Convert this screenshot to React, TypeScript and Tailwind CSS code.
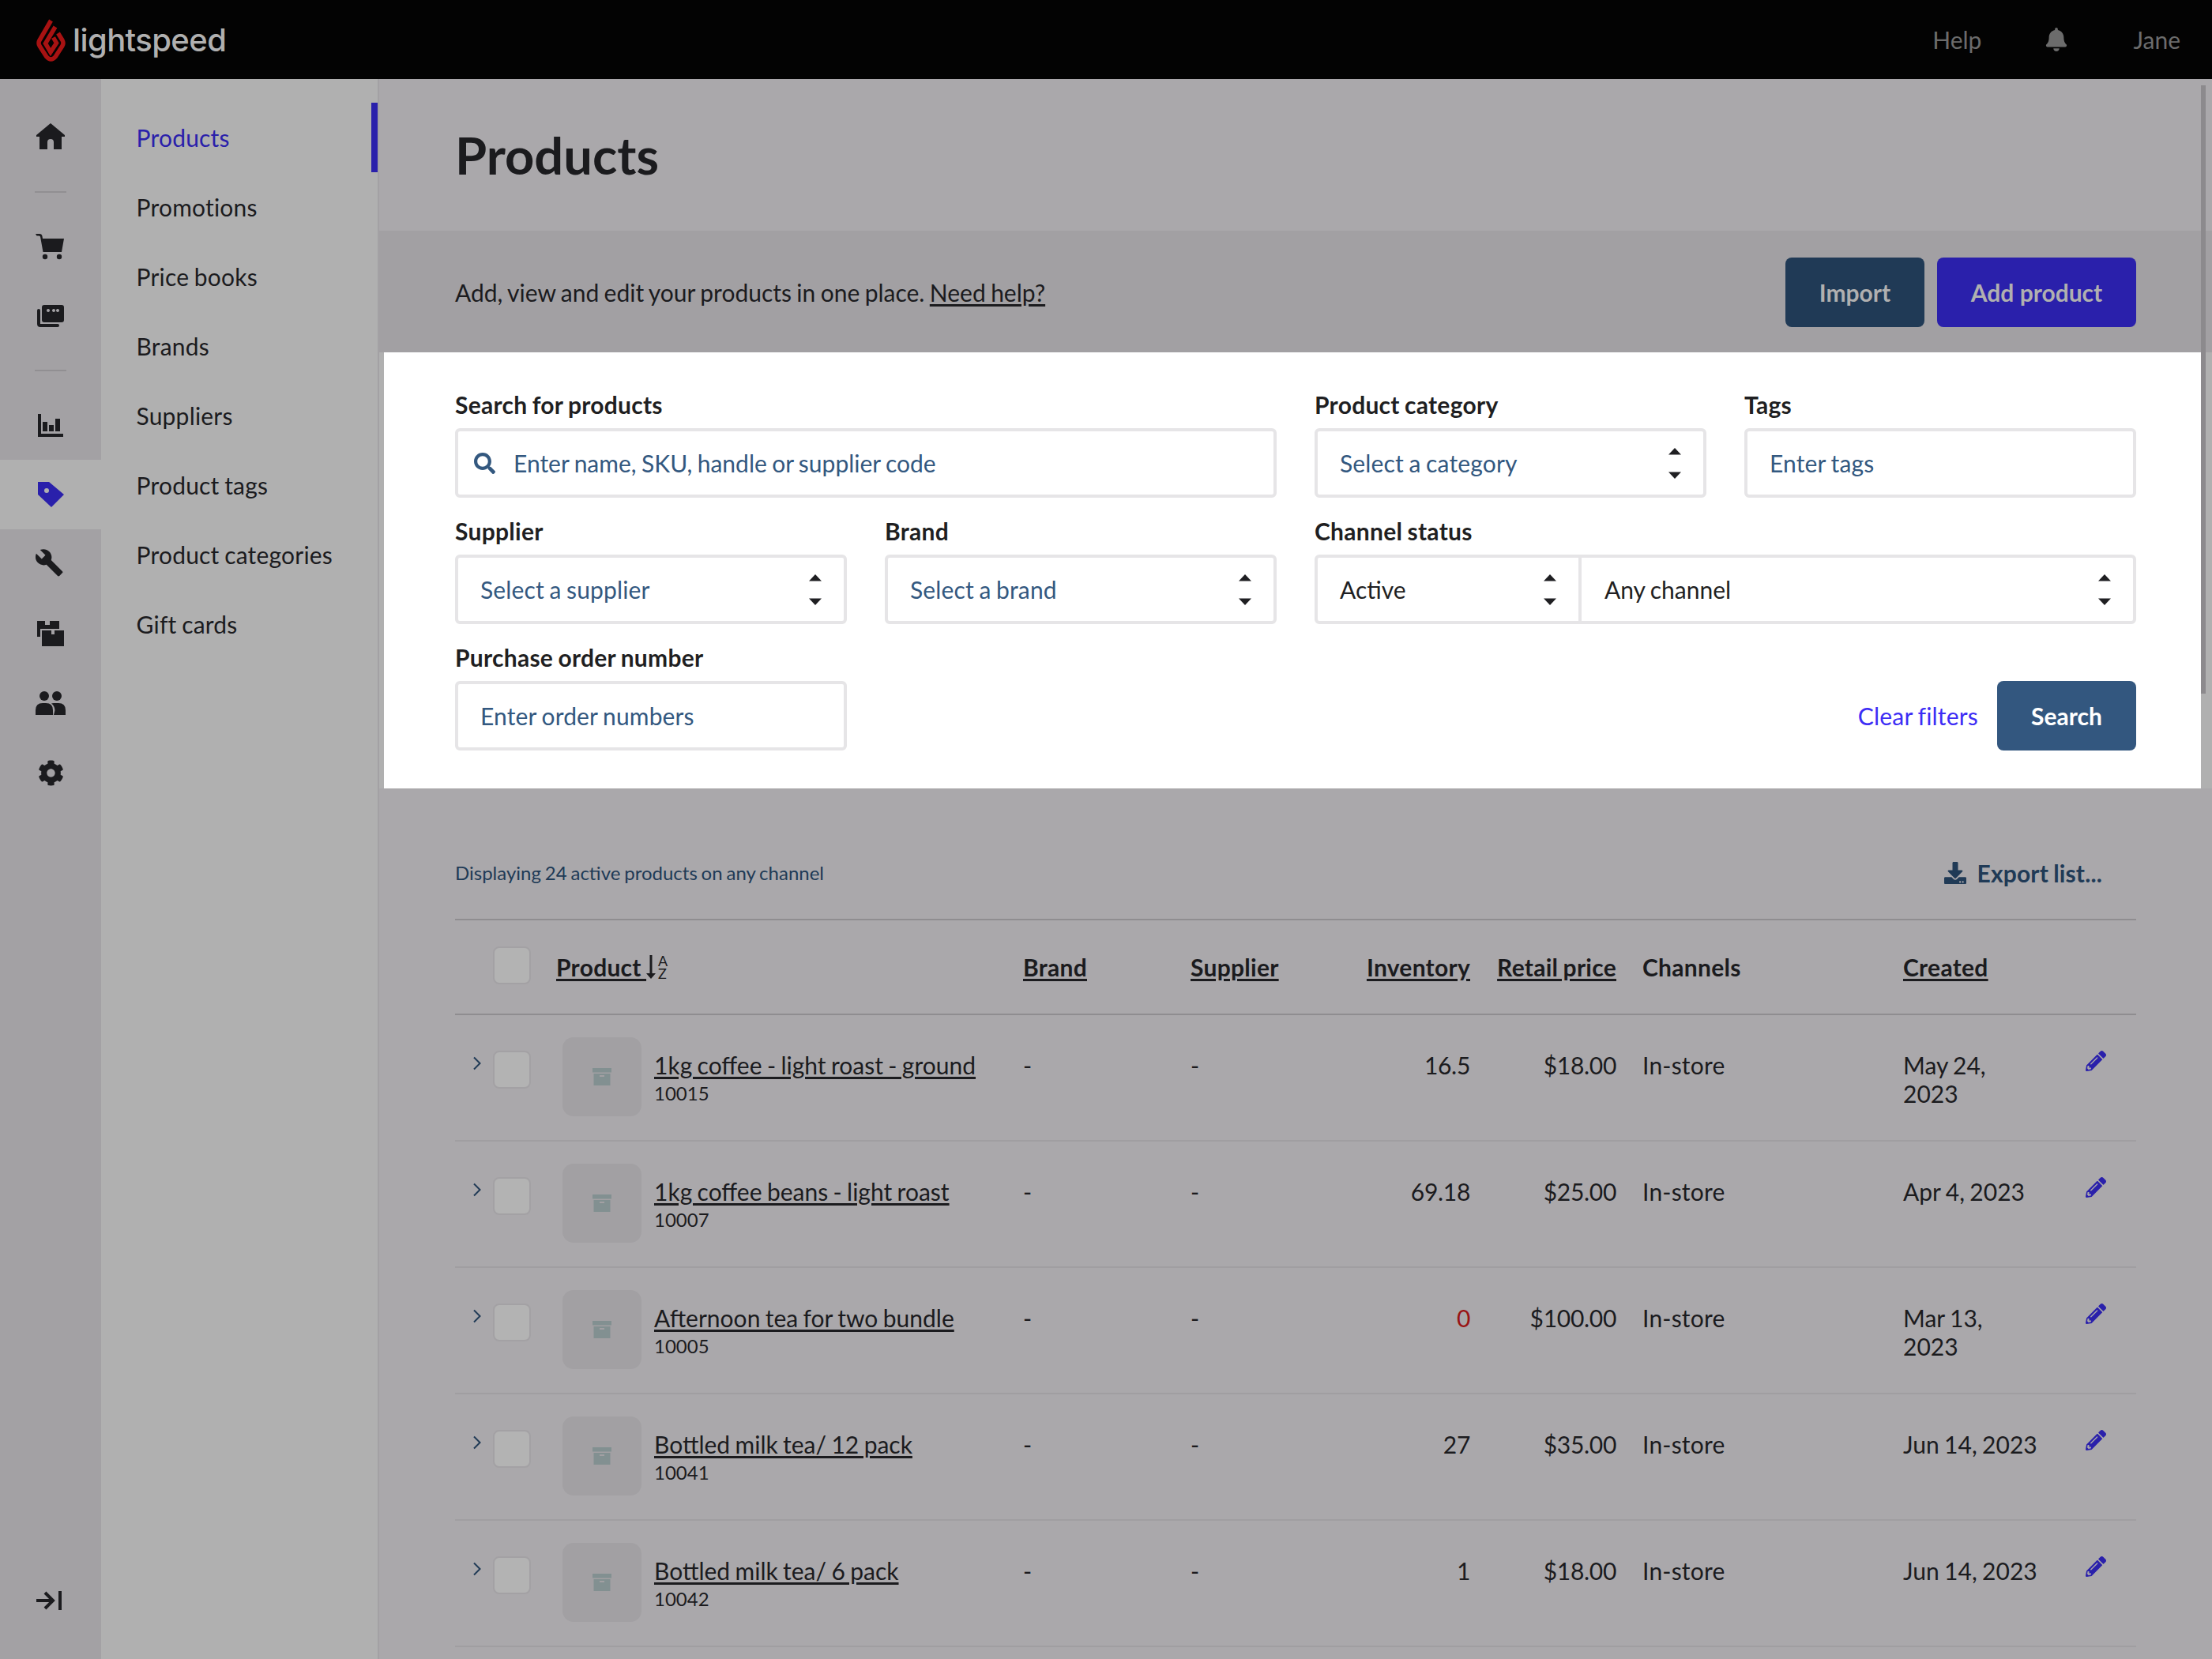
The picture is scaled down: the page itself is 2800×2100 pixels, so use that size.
import React from "react";
import { FaBell, FaCog, FaDownload, FaPencilAlt, FaSearch } from "react-icons/fa";

function Updown({ className = "" }: { className?: string }) {
  return (
    <svg width="16" height="39" viewBox="0 0 16 39" className={className}>
      <polygon points="8,0 16,8.5 0,8.5" fill="#1f1f22" />
      <polygon points="8,39 16,30.5 0,30.5" fill="#1f1f22" />
    </svg>
  );
}

function Label({ children }: { children: React.ReactNode }) {
  return <div className="h-[50px] text-[30px] leading-[40px] font-bold text-[#1f1f22] tracking-[0.27px]">{children}</div>;
}

function Field({ label, placeholder, select, className = "" }: { label: string; placeholder: string; select?: boolean; className?: string }) {
  return (
    <div className={className}>
      <Label>{label}</Label>
      <div className="h-[88px] rounded-[6px] border-[4px] border-[#e6e5e7] bg-white flex items-center justify-between pl-[28px] pr-[28px]">
        <span className="text-[30px] tracking-[0.15px] text-[#33587f]">{placeholder}</span>
        {select && <Updown />}
      </div>
    </div>
  );
}

function Box() {
  return (
    <svg width="24" height="22" viewBox="0 0 24 22">
      <rect x="0" y="0" width="24" height="5.5" fill="#829091" />
      <path fillRule="evenodd" d="M1.5 7H22.5V22H1.5ZM9 9V11H15V9Z" fill="#829091" />
    </svg>
  );
}

const COLS = "grid grid-cols-[128px_591px_212px_193px_161px_185px_33px_330px_174px_1fr]";

function Row({ name, sku, inv, price, date, red }: { name: string; sku: string; inv: string; price: string; date: string; red?: boolean }) {
  return (
    <div className={`${COLS} h-[160px] border-b-[2px] border-[#a09ea1] text-[30px] leading-[36px]`}>
      <div className="flex items-start">
        <svg width="10" height="18" viewBox="0 0 10 18" className="ml-[23px] mt-[52px]">
          <path d="M1 1.5 L8.5 9 L1 16.5" fill="none" stroke="#203a56" strokeWidth="2" />
        </svg>
        <div className="ml-[15px] mt-[45px] w-[48px] h-[48px] rounded-[8px] border-[2px] border-[#a3a1a4] bg-[#b3b3b3]" />
      </div>
      <div className="flex items-start pl-[8px]">
        <div className="mt-[28px] w-[100px] h-[100px] rounded-[14px] bg-[#a2a0a3] flex items-center justify-center">
          <Box />
        </div>
        <div className="ml-[16px] mt-[45px]">
          <div className="underline underline-offset-[3px]">{name}</div>
          <div className="text-[24px]">{sku}</div>
        </div>
      </div>
      <div className="pt-[45px]">-</div>
      <div className="pt-[45px]">-</div>
      <div className={`pt-[45px] text-right tracking-[-0.3px] ${red ? "text-[#991414]" : ""}`}>{inv}</div>
      <div className="pt-[45px] text-right tracking-[-0.3px]">{price}</div>
      <div />
      <div className="pt-[45px] tracking-[0.2px]">In-store</div>
      <div className="pt-[45px]">{date}</div>
      <div className="pt-[45px] pl-[57px] text-[#2a20ab]">
        <FaPencilAlt size={26} />
      </div>
    </div>
  );
}

function RailItem({ children, active }: { children: React.ReactNode; active?: boolean }) {
  return <div className={`h-[88px] flex items-center justify-center ${active ? "bg-[#b0b0b0]" : ""}`}>{children}</div>;
}

function Sep() {
  return <div className="mx-[44px] h-[2px] bg-[#918f92]" />;
}

const NAV = ["Products", "Promotions", "Price books", "Brands", "Suppliers", "Product tags", "Product categories", "Gift cards"];

export default function App() {
  return (
    <div className="relative w-[2800px] h-[2100px] overflow-hidden font-[Lato,sans-serif] [word-spacing:-1.3px] bg-[#aaa8ab] text-[#1b1b1e]">
      <header className="h-[100px] bg-[#030303] flex items-center pl-[46px] pr-[40px]">
        <svg width="37" height="56" viewBox="0 0 37 56" className="mt-[1px]" fill="none" stroke="#a81212" strokeWidth="5.5">
          <path d="M18.5 3 L4 28 Q2 31.5 4 35 L13 49 Q18.5 55 24 49 L33 35 Q35 31.5 33 28 L27.5 19" />
          <path d="M24 11 L11.5 32 L18 43 L25.5 31.5 L21.5 24.5" />
        </svg>
        <span className="ml-[9px] mt-[1px] font-[Inter,sans-serif] font-medium text-[40px] leading-none tracking-[-0.6px] text-[#b0b0b0]">lightspeed</span>
        <div className="ml-auto flex items-center text-[30px] text-[#6c6c6c]">
          <span>Help</span>
          <FaBell size={30} className="ml-[80px]" />
          <span className="ml-[82px]">Jane</span>
        </div>
      </header>

      <div className="flex h-[2000px]">
        <aside className="w-[128px] bg-[#a3a1a4] flex flex-col text-[#1b1b1e] pt-[28px]">
          <RailItem>
            <svg width="36" height="33" viewBox="0 0 36 33" fill="currentColor">
              <path d="M18 0 L36 15 V17 H32 V33 H22 V24 A4 4 0 0 0 14 24 V33 H4 V17 H0 V15 Z" />
            </svg>
          </RailItem>
          <div className="h-[52px] pt-[26px]"><Sep /></div>
          <RailItem>
            <svg width="36" height="33" viewBox="0 0 36 33" fill="currentColor" className="ml-[-2px]">
              <path d="M0 0 H5 Q8 0 8.5 3 L9 6 H36 L33 23 H11 L9.5 23 L6 3.5 Q5.5 2.5 4 2.5 L1.5 2.5 Z" />
              <circle cx="12" cy="29" r="3.2" />
              <circle cx="30" cy="29" r="3.2" />
            </svg>
          </RailItem>
          <RailItem>
            <svg width="34" height="28" viewBox="0 0 34 28" fill="currentColor">
              <path d="M9 0 H31 A3 3 0 0 1 34 3 V19 A3 3 0 0 1 31 22 H9 A3 3 0 0 1 6 19 V3 A3 3 0 0 1 9 0 Z M14 5 a2 2 0 1 0 0.01 0 Z M21 5 a2 2 0 1 0 0.01 0 Z M26 5 a2 2 0 1 0 0.01 0 Z" fillRule="evenodd" />
              <path d="M2 7 V24 Q2 26 4 26 H26" fill="none" stroke="currentColor" strokeWidth="4" strokeLinecap="round" />
            </svg>
          </RailItem>
          <div className="h-[50px] pt-[24px]"><Sep /></div>
          <RailItem>
            <svg width="32" height="29" viewBox="0 0 32 29" fill="currentColor">
              <path d="M0 0 H4 V25 H32 V29 H0 Z" />
              <rect x="6" y="10" width="6" height="12" />
              <rect x="14" y="14" width="6" height="8" />
              <rect x="22" y="6" width="6" height="16" />
            </svg>
          </RailItem>
          <RailItem active>
            <svg width="33" height="32" viewBox="0 0 33 32">
              <path d="M0 0 H14 L33 16 L17 32 L0 16 Z" fill="#2a20ab" />
              <circle cx="11" cy="11" r="3" fill="#b0b0b0" />
            </svg>
          </RailItem>
          <RailItem>
            <svg width="36" height="36" viewBox="1 1 23 23" fill="currentColor" className="mt-[-2px] ml-[-2px]">
              <path d="M22.7 19l-9.1-9.1c.9-2.3.4-5-1.5-6.9-2-2-5-2.4-7.4-1.3L9 6 6 9 1.6 4.7C.4 7.1.9 10.1 2.9 12.1c1.9 1.9 4.6 2.4 6.9 1.5l9.1 9.1c.4.4 1 .4 1.4 0l2.3-2.3c.5-.4.5-1.1.1-1.4z" />
            </svg>
          </RailItem>
          <RailItem>
            <svg width="34" height="32" viewBox="0 0 34 32" fill="currentColor">
              <rect x="0" y="0" width="28" height="20" />
              <rect x="10" y="0" width="6" height="5" fill="#a3a1a4" />
              <rect x="4" y="10" width="30" height="22" fill="#a3a1a4" />
              <rect x="6" y="12" width="28" height="20" />
              <rect x="18" y="12" width="4" height="5" fill="#a3a1a4" />
            </svg>
          </RailItem>
          <RailItem>
            <svg width="38" height="30" viewBox="0 0 38 30" fill="currentColor">
              <circle cx="11" cy="6" r="6" />
              <circle cx="27" cy="6" r="6" />
              <path d="M0 30 V24 Q0 15 9 15 H13 Q22 15 22 24 V30 Z" />
              <path d="M23 30 H38 V24 Q38 15 29 15 H23 Q21 15 20 15.5 Q24 18 24.5 24 Z" />
            </svg>
          </RailItem>
          <RailItem>
            <FaCog size={33} />
          </RailItem>
          <div className="mt-auto pb-[62px] pl-[46px]">
            <svg width="32" height="24" viewBox="0 0 32 24" className="block" fill="none" stroke="currentColor" strokeWidth="4">
              <path d="M0 12 H22" />
              <path d="M11 2 L21 12 L11 22" />
              <path d="M30 0 V24" />
            </svg>
          </div>
        </aside>

        <nav className="w-[352px] bg-[#b0b0b0] border-r-[2px] border-[#a3a1a4] pt-[30px] text-[30px] tracking-[0.2px]">
          {NAV.map((n, i) => (
            <div
              key={n}
              className={`h-[88px] flex items-center pl-[44.5px] border-r-[8px] ${i === 0 ? "border-[#2a20ab] text-[#2a20ab]" : "border-transparent"}`}
            >
              {n}
            </div>
          ))}
        </nav>

        <main className="flex-1 min-w-0">
          <div className="h-[192px] pl-[96px] pr-[96px] flex items-center">
            <h1 className="text-[65px] font-bold leading-none text-[#1b1b1e]">Products</h1>
          </div>
          <div className="h-[154px] bg-[#a2a0a3] pl-[96px] pr-[96px] pt-[2px] flex items-center justify-between text-[30px]">
            <p>
              Add, view and edit your products in one place. <span className="underline underline-offset-[3px]">Need help?</span>
            </p>
            <div className="flex gap-[16px] text-[30px] font-bold text-[#b0b0b0]">
              <button className="h-[88px] w-[176px] rounded-[8px] bg-[#203a56]">Import</button>
              <button className="h-[88px] w-[252px] rounded-[8px] bg-[#2a20ab]">Add product</button>
            </div>
          </div>

          <section className="h-[552px] border-l-[6px] border-r-[14px] border-[#b0b0b0] bg-white pl-[90px] pr-[82px] pt-[46px]">
            <div className="grid grid-cols-4 gap-x-[48px] gap-y-[22px]">
              <div className="col-span-2">
                <Label>Search for products</Label>
                <div className="h-[88px] rounded-[6px] border-[4px] border-[#e6e5e7] flex items-center pl-[20px]">
                  <FaSearch size={27} color="#33587f" />
                  <span className="ml-[23px] text-[30px] text-[#33587f]">Enter name, SKU, handle or supplier code</span>
                </div>
              </div>
              <Field label="Product category" placeholder="Select a category" select />
              <Field label="Tags" placeholder="Enter tags" />
              <Field label="Supplier" placeholder="Select a supplier" select />
              <Field label="Brand" placeholder="Select a brand" select />
              <div className="col-span-2">
                <Label>Channel status</Label>
                <div className="h-[88px] rounded-[6px] border-[4px] border-[#e6e5e7] flex text-[30px] text-[#1f1f22]">
                  <div className="w-[334px] border-r-[4px] border-[#e6e5e7] flex items-center justify-between pl-[28px] pr-[28px]">
                    <span>Active</span>
                    <Updown />
                  </div>
                  <div className="flex-1 flex items-center justify-between pl-[29px] pr-[28px]">
                    <span>Any channel</span>
                    <Updown />
                  </div>
                </div>
              </div>
              <Field label="Purchase order number" placeholder="Enter order numbers" />
              <div className="col-span-3 flex items-center justify-end pt-[50px]">
                <span className="text-[30px] tracking-[0.2px] text-[#3d2df5] mr-[24px]">Clear filters</span>
                <button className="h-[88px] w-[176px] rounded-[8px] bg-[#33577f] text-white text-[30px] font-bold">Search</button>
              </div>
            </div>
          </section>

          <div className="pl-[96px] pr-[96px]">
            <div className="h-[167px] flex items-center justify-between border-b-[2px] border-[#8f8d90] pt-[49px]">
              <span className="text-[24px] text-[#203a56]">Displaying 24 active products on any channel</span>
              <span className="flex items-center text-[30px] font-bold tracking-[0.15px] text-[#203a56] pr-[43px]">
                <FaDownload size={28} />
                <span className="ml-[14px]">Export list...</span>
              </span>
            </div>
            <div className={`${COLS} h-[120px] items-center border-b-[2px] border-[#8f8d90] text-[30px] font-bold tracking-[0.27px]`}>
              <div className="pl-[48px] pb-[4px]">
                <div className="w-[48px] h-[48px] rounded-[8px] border-[2px] border-[#a3a1a4] bg-[#b3b3b3]" />
              </div>
              <div className="flex items-center">
                <span className="underline underline-offset-[3px] whitespace-pre">Product </span>
                <svg width="12" height="30" viewBox="0 0 12 30" className="mt-[-1px]" fill="#1b1b1e">
                  <path d="M4.5 0 H7.5 V23 H12 L6 30 L0 23 H4.5 Z" />
                </svg>
                <span className="flex flex-col ml-[3px] text-[18px] leading-[16px] font-normal">
                  <span>A</span>
                  <span>Z</span>
                </span>
              </div>
              <div className="underline underline-offset-[3px]">Brand</div>
              <div className="underline underline-offset-[3px]">Supplier</div>
              <div className="underline underline-offset-[3px] text-right">Inventory</div>
              <div className="underline underline-offset-[3px] text-right">Retail price</div>
              <div />
              <div>Channels</div>
              <div className="underline underline-offset-[3px]">Created</div>
              <div />
            </div>
            <Row name="1kg coffee - light roast - ground" sku="10015" inv="16.5" price="$18.00" date="May 24, 2023" />
            <Row name="1kg coffee beans - light roast" sku="10007" inv="69.18" price="$25.00" date="Apr 4, 2023" />
            <Row name="Afternoon tea for two bundle" sku="10005" inv="0" price="$100.00" date="Mar 13, 2023" red />
            <Row name="Bottled milk tea/ 12 pack" sku="10041" inv="27" price="$35.00" date="Jun 14, 2023" />
            <Row name="Bottled milk tea/ 6 pack" sku="10042" inv="1" price="$18.00" date="Jun 14, 2023" />
          </div>
        </main>
      </div>

      <div className="absolute left-[2786px] top-[108px] w-[6px] h-[770px] bg-[#8c8a8d]" />
    </div>
  );
}
